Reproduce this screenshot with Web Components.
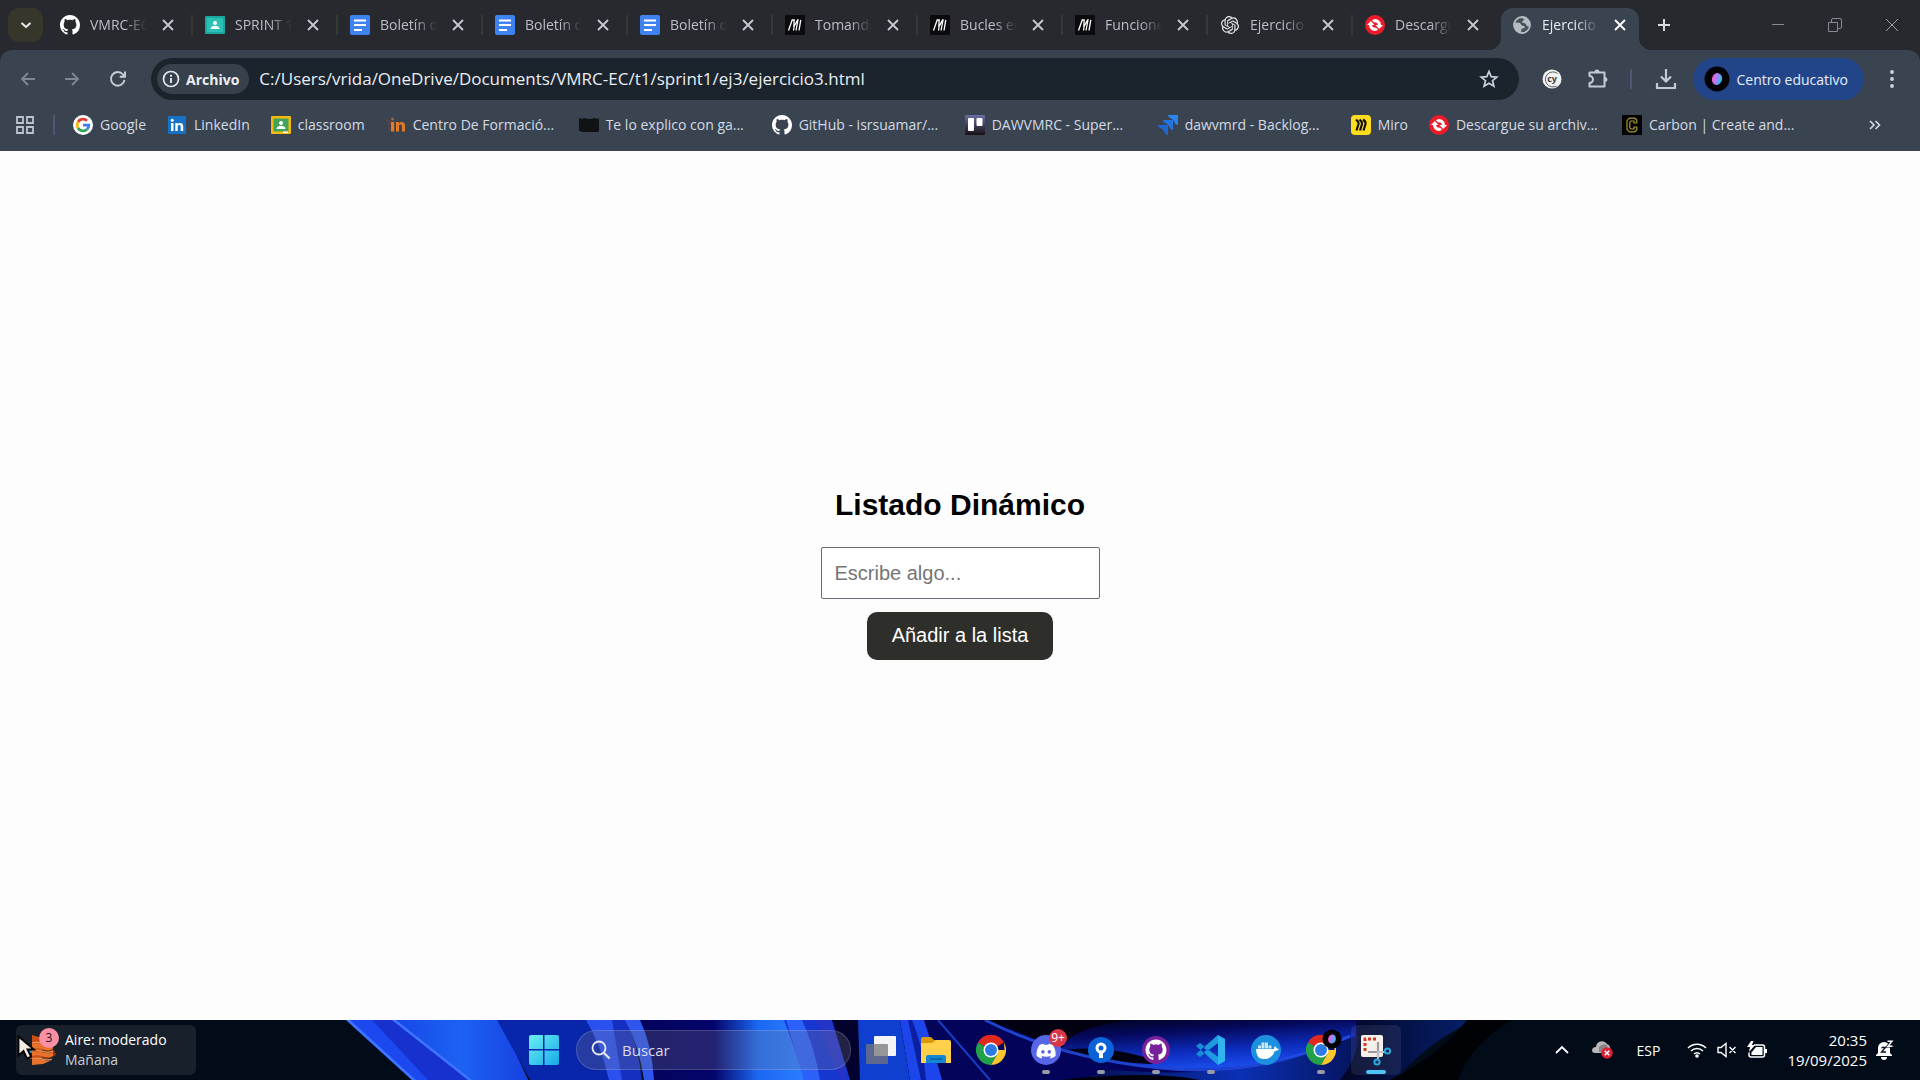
<!DOCTYPE html>
<html lang="es">
<head>
<meta charset="utf-8">
<title>Ejercicio 3</title>
<style>
html,body{height:100%;margin:0}
body{font-family:"Open Sans","Noto Sans",sans-serif;font-size:14px;color:#d3dae6;overflow:hidden}
</style>
</head>
<body>
<desktop-screen></desktop-screen>
<script>
const GH='M8 0C3.58 0 0 3.58 0 8c0 3.54 2.29 6.53 5.47 7.59.4.07.55-.17.55-.38 0-.19-.01-.82-.01-1.49-2.01.37-2.53-.49-2.69-.94-.09-.23-.48-.94-.82-1.13-.28-.15-.68-.52-.01-.53.63-.01 1.08.58 1.23.82.72 1.21 1.87.87 2.33.66.07-.52.28-.87.51-1.07-1.78-.2-3.64-.89-3.64-3.95 0-.87.31-1.59.82-2.15-.08-.2-.36-1.02.08-2.12 0 0 .67-.21 2.2.82.64-.18 1.32-.27 2-.27s1.36.09 2 .27c1.53-1.04 2.2-.82 2.2-.82.44 1.1.16 1.92.08 2.12.51.56.82 1.27.82 2.15 0 3.07-1.87 3.75-3.65 3.95.29.25.54.73.54 1.48 0 1.07-.01 1.93-.01 2.2 0 .21.15.46.55.38A8.01 8.01 0 0 0 16 8c0-4.42-3.58-8-8-8z';
const DISCORD='M20.317 4.3698a19.7913 19.7913 0 00-4.8851-1.5152.0741.0741 0 00-.0785.0371c-.211.3753-.4447.8648-.6083 1.2495-1.8447-.2762-3.68-.2762-5.4868 0-.1636-.3933-.4058-.8742-.6177-1.2495a.077.077 0 00-.0785-.037 19.7363 19.7363 0 00-4.8852 1.515.0699.0699 0 00-.0321.0277C.5334 9.0458-.319 13.5799.0992 18.0578a.0824.0824 0 00.0312.0561c2.0528 1.5076 4.0413 2.4228 5.9929 3.0294a.0777.0777 0 00.0842-.0276c.4616-.6304.8731-1.2952 1.226-1.9942a.076.076 0 00-.0416-.1057c-.6528-.2476-1.2743-.5495-1.8722-.8923a.077.077 0 01-.0076-.1277c.1258-.0943.2517-.1923.3718-.2914a.0743.0743 0 01.0776-.0105c3.9278 1.7933 8.18 1.7933 12.0614 0a.0739.0739 0 01.0785.0095c.1202.099.246.1981.3728.2924a.077.077 0 01-.0066.1276 12.2986 12.2986 0 01-1.873.8914.0766.0766 0 00-.0407.1067c.3604.698.7719 1.3628 1.225 1.9932a.076.076 0 00.0842.0286c1.961-.6067 3.9495-1.5219 6.0023-3.0294a.077.077 0 00.0313-.0552c.5004-5.177-.8382-9.6739-3.5485-13.6604a.061.061 0 00-.0312-.0286zM8.02 15.3312c-1.1825 0-2.1569-1.0857-2.1569-2.419 0-1.3332.9555-2.4189 2.157-2.4189 1.2108 0 2.1757 1.0952 2.1568 2.419 0 1.3332-.9555 2.4189-2.1569 2.4189zm7.9748 0c-1.1825 0-2.1569-1.0857-2.1569-2.419 0-1.3332.9554-2.4189 2.1569-2.4189 1.2108 0 2.1757 1.0952 2.1568 2.419 0 1.3332-.946 2.4189-2.1568 2.4189z';
const OPENAI='M22.2819 9.8211a5.9847 5.9847 0 0 0-.5157-4.9108 6.0462 6.0462 0 0 0-6.5098-2.9A6.0651 6.0651 0 0 0 4.9807 4.1818a5.9847 5.9847 0 0 0-3.9977 2.9 6.0462 6.0462 0 0 0 .7427 7.0966 5.98 5.98 0 0 0 .511 4.9107 6.051 6.051 0 0 0 6.5146 2.9001A5.9847 5.9847 0 0 0 13.2599 24a6.0557 6.0557 0 0 0 5.7718-4.2058 5.9894 5.9894 0 0 0 3.9977-2.9001 6.0557 6.0557 0 0 0-.7475-7.0729zm-9.022 12.6081a4.4755 4.4755 0 0 1-2.8764-1.0408l.1419-.0804 4.7783-2.7582a.7948.7948 0 0 0 .3927-.6813v-6.7369l2.02 1.1686a.071.071 0 0 1 .038.052v5.5826a4.504 4.504 0 0 1-4.4945 4.4944zm-9.6607-4.1254a4.4708 4.4708 0 0 1-.5346-3.0137l.142.0852 4.783 2.7582a.7712.7712 0 0 0 .7806 0l5.8428-3.3685v2.3324a.0804.0804 0 0 1-.0332.0615L9.74 19.9502a4.4992 4.4992 0 0 1-6.1408-1.6464zM2.3408 7.8956a4.485 4.485 0 0 1 2.3655-1.9728V11.6a.7664.7664 0 0 0 .3879.6765l5.8144 3.3543-2.0201 1.1685a.0757.0757 0 0 1-.071 0l-4.8303-2.7865A4.504 4.504 0 0 1 2.3408 7.872zm16.5963 3.8558L13.1038 8.364 15.1192 7.2a.0757.0757 0 0 1 .071 0l4.8303 2.7913a4.4944 4.4944 0 0 1-.6765 8.1042v-5.6772a.79.79 0 0 0-.407-.667zm2.0107-3.0231l-.142-.0852-4.7735-2.7818a.7759.7759 0 0 0-.7854 0L9.409 9.2297V6.8974a.0662.0662 0 0 1 .0284-.0615l4.8303-2.7866a4.4992 4.4992 0 0 1 6.6802 4.66zM8.3065 12.863l-2.02-1.1638a.0804.0804 0 0 1-.038-.0567V6.0742a4.4992 4.4992 0 0 1 7.3757-3.4537l-.142.0805L8.704 5.459a.7948.7948 0 0 0-.3927.6813zm1.0976-2.3654l2.602-1.4998 2.6069 1.4998v2.9994l-2.5974 1.4997-2.6067-1.4997Z';
const chromeArt=`<path d="M15 15 2 7.5A15 15 0 0 1 28 7.5Z" fill="#e02a20"/><path d="M15 15 2 7.5A15 15 0 0 0 15 30L21.5 18.7Z" fill="#22a04c"/><path d="M15 15H28.5L28 7.5A15 15 0 0 1 15 30L21.5 18.7Z" fill="#fbc72e"/><path d="M2 7.5A15 15 0 0 1 28 7.5H15Z" fill="#e02a20"/><circle cx="15" cy="15" r="7.5" fill="#fff"/><circle cx="15" cy="15" r="6" fill="#2c7be5"/>`;
/* name: [width, height, viewBox, markup] */
const ICONS={
 down:[16,16,'0 0 16 16','<path d="M3.500 6l4.500 4 4.500-4" fill="none" stroke="#e8eaee" stroke-width="2"/>'],
 close:[14,14,'0 0 14 14','<path d="M2 2l10 10M12 2l-10 10" stroke="currentColor" stroke-width="1.8"/>'],
 plus:[14,14,'0 0 14 14','<path d="M7 1v12M1 7h12" stroke="#d6dae2" stroke-width="2"/>'],
 github:[20,20,'0 0 16 16',`<path d="${GH}" fill="#fff"/>`],
 sprint:[20,20,'0 0 20 20','<rect y="1" width="20" height="18" rx="1" fill="#18a8a0"/><rect x="2" y="3" width="16" height="14" fill="#2bbfb5"/><circle cx="10" cy="8" r="2" fill="#fff"/><path d="M5.5 14c0-4.500 9-4.500 9 0z" fill="#fff"/>'],
 classroom:[20,20,'0 0 20 20','<rect y="1" width="20" height="18" rx="1" fill="#f2b90f"/><rect x="2.500" y="3.500" width="15" height="13" fill="#43a35c"/><circle cx="10" cy="8" r="2" fill="#fff"/><path d="M5.500 14c0-4.500 9-4.500 9 0z" fill="#fff"/><path d="M12 16.500h5V18h-5z" fill="#fff"/>'],
 docs:[20,20,'0 0 20 20','<rect width="20" height="20" rx="2" fill="#3f83f0"/><path d="M4 5.500h12M4 10h12M4 15h8" stroke="#fff" stroke-width="2"/>'],
 mdn:[20,20,'0 0 20 20','<rect width="20" height="20" fill="#0b0b0f"/><path d="M3.500 15.500 7.200 5H9.200L8.800 12 12.600 5H13L11 15.500M15.800 4.800 14 15.500M9 12 8.500 15.500" fill="none" stroke="#fff" stroke-width="1.300"/>'],
 openai:[18,18,'0 0 24 24',`<path d="${OPENAI}" fill="#e6e8ea"/>`],
 ilove:[20,20,'0 0 20 20','<circle cx="10" cy="10" r="10" fill="#ee1c2a"/><path d="M10 4a6 6 0 0 1 6 6h2l-3.800 4-3.700-4H13a3 3 0 0 0-4-2.500L7 5.200A6 6 0 0 1 10 4ZM10 16a6 6 0 0 1-6-6H2l3.800-4 3.700 4H7a3 3 0 0 0 4 2.500l2 2.300A6 6 0 0 1 10 16Z" fill="#fff"/>'],
 globe:[18,18,'0 0 18 18','<circle cx="9" cy="9" r="8" fill="#46505a" stroke="#b4bcc2" stroke-width="1.800"/><path d="M1 7l4-.5c3 0 3 3.500 5.500 3.500 2 0 1.500 2.500-.5 2.500s-1.500 2-2 4.500C3 16.500.5 12 1 7ZM8 1c6-.5 9 4 9 8-1 2.500-3.500 1.500-4-.5S9 7.500 9 6s2-1 2-2.500S8 3 8 1Z" fill="#b4bcc2"/>'],
 min:[14,14,'0 0 14 14','<path d="M1 6.500h12" stroke="#858b94"/>'],
 restore:[14,14,'0 0 14 14','<path d="M.5 4.500h9v9h-9zM3.500 4V2a1.500 1.500 0 0 1 1.500-1.500h7A1.500 1.500 0 0 1 13.500 2v7a1.500 1.500 0 0 1-1.500 1.500h-2" fill="none" stroke="#858b94"/>'],
 winclose:[14,14,'0 0 14 14','<path d="M1 1l12 12M13 1 1 13" stroke="#9aa0a8"/>'],
 back:[18,18,'0 0 18 18','<path d="M16 9H3M9 3 3 9l6 6" fill="none" stroke="#7f8793" stroke-width="1.800"/>'],
 fwd:[18,18,'0 0 18 18','<path d="M2 9h13M9 3l6 6-6 6" fill="none" stroke="#7f8793" stroke-width="1.800"/>'],
 reload:[18,18,'0 0 18 18','<path d="M15.500 9.800A6.800 6.800 0 1 1 14 4.500L16 6.500M16 1.500v5.300h-5.300" fill="none" stroke="#c8ced8" stroke-width="1.900"/>'],
 info:[18,18,'0 0 18 18','<circle cx="9" cy="9" r="7.500" fill="none" stroke="#e4e8ee" stroke-width="1.700"/><path d="M9 8v5M9 4.800v1.900" stroke="#e4e8ee" stroke-width="1.900"/>'],
 star:[20,20,'0 0 20 20','<path d="M10 2.500l2.200 5.200 5.600.4-4.300 3.600 1.400 5.500L10 14.200l-4.900 3 1.400-5.500L2.200 8.100l5.600-.4Z" fill="none" stroke="#c8d0dc" stroke-width="1.700"/>'],
 cy:[20,20,'0 0 20 20','<circle cx="10" cy="10" r="9.500" fill="#f2f2ee"/><path d="M15.500 4.500a7.500 7.500 0 1 0-1 12.500" fill="none" stroke="#5a6068"/><text x="10" y="13" text-anchor="middle" font-size="9" font-weight="700" fill="#3b4048" font-family="Open Sans">cy</text>'],
 puzzle:[22,22,'0 0 22 22','<path d="M2.500 4.500H17.500V18.500H2.500V15a3.500 3.500 0 0 0 0-7Z" fill="none" stroke="#c3cad6" stroke-width="2" stroke-linejoin="round"/><path d="M7.500 4a2.500 2.500 0 0 1 5 0ZM18 9a2.500 2.500 0 0 1 0 5Z" fill="#c3cad6"/>'],
 download:[22,22,'0 0 22 22','<path d="M11 1v12M6 8.500l5 5 5-5M2 15v5h18v-5" fill="none" stroke="#c3cad6" stroke-width="2.200"/>'],
 avatar:[26,26,'0 0 26 26','<defs><linearGradient id="av"><stop offset="0" stop-color="#f063d8"/><stop offset=".45" stop-color="#b07cf2"/><stop offset="1" stop-color="#12d0f0"/></linearGradient></defs><circle cx="13" cy="13" r="12.500" fill="#020206"/><ellipse cx="13" cy="13" rx="5" ry="6" fill="url(#av)" transform="rotate(15 13 13)"/>'],
 dots:[6,20,'0 0 6 20','<g fill="#ccd3de"><circle cx="3" cy="3" r="1.900"/><circle cx="3" cy="10" r="1.900"/><circle cx="3" cy="17" r="1.900"/></g>'],
 apps:[18,18,'0 0 18 18','<path d="M1 1h6v6H1zM11 1h6v6h-6zM1 11h6v6H1zM11 11h6v6h-6z" fill="none" stroke="#bcc3cf" stroke-width="1.800"/>'],
 more:[12,12,'0 0 12 12','<path d="M1 2l4 4-4 4M6.500 2l4 4-4 4" fill="none" stroke="#d3dae6" stroke-width="1.600"/>'],
 google:[20,20,'0 0 20 20','<circle cx="10" cy="10" r="10" fill="#fff"/><g fill="none" stroke-width="2.800"><path d="M5 7a5.800 5.800 0 0 1 9-1.200" stroke="#e33b2e"/><path d="M5 13a5.800 5.800 0 0 1 0-6" stroke="#f5b912"/><path d="M14 14.300A5.800 5.800 0 0 1 5 13" stroke="#2fa650"/><path d="M10 10.200h5.800a5.800 5.800 0 0 1-1.800 4.100" stroke="#3b7ded"/></g>'],
 linkedin:[20,20,'0 0 20 20','<rect x="1" y="1" width="18" height="18" rx="1" fill="#1672c4"/><path d="M4 8h2.500v8H4zM8.300 8h2.400v1.200c1-2 5.500-2 5.500 2V16h-2.500v-4.300c0-2.200-3-2-3 0V16H8.300z" fill="#fff"/><circle cx="5.200" cy="5.200" r="1.500" fill="#fff"/>'],
 centro:[20,20,'0 0 20 20','<path d="M0 5l4 1v3l-2 1M2 13h2v3" fill="none" stroke="#6a3f40" stroke-width="1.500"/><path d="M5 7h3.200v9.500H5zM10 7h3v1.500c1.200-2.500 6-2.300 6 2v6h-3v-5.300c0-2.300-3-2.300-3 0v5.300h-3z" fill="#e27a24"/><circle cx="6.500" cy="4" r="1.400" fill="#b3613a"/>'],
 cat:[20,20,'0 0 20 20','<path d="M0 3l3 1 2-1 5 1 6-1 2 1 2-1v13l-1 1H3l-1-1H0Z" fill="#101214"/>'],
 trello:[20,20,'0 0 20 20','<defs><linearGradient id="tr" x2="0" y2="1"><stop stop-color="#6a70a6"/><stop offset="1" stop-color="#181013"/></linearGradient></defs><rect width="20" height="20" rx="1" fill="url(#tr)"/><rect x="3" y="3" width="6" height="13" rx="1" fill="#fff"/><rect x="11.500" y="3" width="6" height="8" rx="1" fill="#fff"/>'],
 jira:[20,20,'0 0 20 20','<path d="M10 0h10v10a4 4 0 0 1-3.500-3.500L13.500 3.500Q10.500 3 10 0Z" fill="#2b83f2"/><path d="M5 5h10v10a4 4 0 0 1-3.500-3.500L8.500 8.500Q5.500 8 5 5Z" fill="#2374e0"/><path d="M0 10h10v10a4 4 0 0 1-3.500-3.500L3.500 13.500Q.5 13 0 10Z" fill="#1c68cf"/>'],
 miro:[20,20,'0 0 20 20','<rect width="20" height="20" rx="4" fill="#ffdd1c"/><path d="M5 4.500Q8 7 7.500 9L5.500 15.500M8.500 4.500Q11.500 7 11 9L9 15.500M12 4.500Q15 6.500 14.500 9L12.500 15.500" fill="none" stroke="#111" stroke-width="2.200"/>'],
 carbon:[20,20,'0 0 20 20','<rect width="20" height="20" fill="#020202"/><path d="M14.800 8V5l-2-1.800H7.500L5 5.700v8.600l2.500 2.500h5.300l2-1.800v-3h-2.800v2H9l-1.200-1.200V7.200L9 6h3v2Z" fill="none" stroke="#a39a2a" stroke-width="1.200"/>'],
 weather:[36,34,'0 0 36 34','<path d="M4 15c6-3 12-2 26 2l2 5-8 4H6l-2-3h6Z" fill="#8f3c14"/><path d="M4 16h6v4H4Z" fill="#2b8cc4"/><path d="M8 2l10 3v24L8 32Z" fill="#c94f14"/><path d="M8 11c8-3 12 4 21 0v5c-8 4-13-3-21 0ZM8 19c8-3 12 4 21 0v4c-8 4-13-3-21 0ZM8 27c8-3 12 2 20 0l-9 4-11 1Z" fill="#e8722c"/><path d="M8 10c8-3 12 4 21 0M8 18c8-3 12 4 21 0M8 26c8-3 12 3 20 0" fill="none" stroke="#f3a56b"/>'],
 cursor:[20,26,'0 0 20 26','<path d="M1.500 1.500v19l5-4.500 3.500 7.500 4-2-3.500-7H17Z" fill="#f3ece2" stroke="#000" stroke-width="1.800"/>'],
 start:[30,30,'0 0 30 30','<defs><linearGradient id="st" x2="1" y2="1"><stop stop-color="#6af0f4"/><stop offset="1" stop-color="#18a9e8"/></linearGradient></defs><path d="M2 0h12v14H0V2a2 2 0 0 1 2-2ZM15.500 0H28a2 2 0 0 1 2 2v12H15.500ZM0 15.500h14V30H2a2 2 0 0 1-2-2ZM15.500 15.500H30V28a2 2 0 0 1-2 2H15.500Z" fill="url(#st)"/>'],
 search:[20,20,'0 0 20 20','<circle cx="8" cy="8" r="6.500" fill="none" stroke="#e9e9ef" stroke-width="1.800"/><path d="M12.800 12.800 18.500 18.500" stroke="#e9e9ef" stroke-width="2.200"/>'],
 taskview:[32,30,'0 0 32 30','<rect x="9" y="1" width="22" height="20" rx="1" fill="#f4f4f6"/><rect x="1" y="9" width="22" height="20" rx="1" fill="#77777a" opacity=".75"/>'],
 folder:[32,30,'0 0 32 30','<path d="M1 4a2 2 0 0 1 2-2h8l3 3h14v6H1Z" fill="#d99a0c"/><path d="M1 8h11l4-3h13a2 2 0 0 1 2 2v21H1Z" fill="#ffd04a"/><path d="M6 28v-6a2 2 0 0 1 2-2h16a2 2 0 0 1 2 2v6Z" fill="#1388d2"/><path d="M10 24h12" stroke="#0c5ea2" stroke-width="1.600"/>'],
 chrome:[30,30,'0 0 30 30',chromeArt],
 discord:[30,30,'0 0 30 30',`<circle cx="15" cy="15" r="15" fill="#5865e6"/><g transform="translate(5.500 6.500) scale(.8)"><path d="${DISCORD}" fill="#fff"/></g>`],
 sourcetree:[28,28,'0 0 28 28','<circle cx="14" cy="14" r="13" fill="#0b62d8"/><circle cx="14" cy="12" r="4" fill="none" stroke="#fff" stroke-width="3"/><path d="M12 16h4v6h-4z" fill="#fff"/>'],
 ghdesk:[30,30,'0 0 30 30',`<circle cx="15" cy="15" r="14" fill="#77219c"/><g transform="translate(4.500 4.500) scale(1.310)"><path d="${GH}" fill="#fff"/></g>`],
 vscode:[32,32,'0 0 32 32','<path d="M23 1l7 4v22l-7 4Z" fill="#30b4f0"/><path d="M23 1v8L5 23 1 20ZM23 31v-8L5 9 1 12Z" fill="#188dd2"/><path d="M23 1 9 14l3 2.500L23 9ZM23 31 9 18l3-2.500L23 23Z" fill="#1c9be0"/>'],
 docker:[30,30,'0 0 30 30','<circle cx="15" cy="15" r="15" fill="#1c90df"/><path d="M5 14h18q0-2 1-3l2 2.500 2 .5q-1 2-4 2-3 8-11 8-8 0-8-10Z" fill="#fff"/><path d="M7 10.500h3v3H7zM10.500 10.500h3v3h-3zM14 10.500h3v3h-3zM17.500 10.500h3v3h-3zM10.500 7.500h3v3h-3zM14 7.500h3v3h-3z" fill="#c9e6fa"/>'],
 snip:[32,32,'0 0 32 32','<rect x="1" y="1" width="22" height="22" rx="2" fill="#f5f0ea"/><path d="M5 17V5h13" fill="none" stroke="#d33a22" stroke-width="3" stroke-dasharray="3 2"/><path d="M18 8v14M8 18h14" stroke="#9a9aa0" stroke-width="2.200"/><path d="M18 17v8M17 18h8" stroke="#bfc3c8" stroke-width="2.200"/><circle cx="17" cy="28" r="2.600" fill="none" stroke="#27a9e0" stroke-width="2"/><circle cx="27.500" cy="17" r="2.600" fill="none" stroke="#27a9e0" stroke-width="2"/>'],
 up:[16,16,'0 0 16 16','<path d="M2 11l6-6 6 6" fill="none" stroke="#fff" stroke-width="1.800"/>'],
 cloud:[22,20,'0 0 22 20','<path d="M1 11a4 4 0 0 1 4-4 6 6 0 0 1 11-3 5 5 0 0 1 1 9H4a3 3 0 0 1-3-2Z" fill="#b9b9bb"/><path d="M8 7a6 6 0 0 1 8-2l1 7H8Z" fill="#858588"/><circle cx="16" cy="13" r="5.800" fill="#dc1f34"/><path d="M13.700 10.700l4.600 4.600m0-4.600-4.600 4.600" stroke="#fff" stroke-width="1.500"/>'],
 wifi:[20,16,'0 0 20 16','<g fill="none" stroke="#fff" stroke-width="1.500"><path d="M1 6a12.500 12.500 0 0 1 18 0M4 9a8.500 8.500 0 0 1 12 0M7 12a4.500 4.500 0 0 1 6 0"/></g><circle cx="10" cy="14" r="1.800" fill="#fff"/>'],
 mute:[20,16,'0 0 20 16','<path d="M1 5.500h3L9 1.500v13L4 10.500H1ZM12.500 5l6 6m0-6-6 6" fill="none" stroke="#fff" stroke-width="1.400"/>'],
 battery:[20,18,'0 0 20 18','<path d="M7 4h8.500a2 2 0 0 1 2 2v8a2 2 0 0 1-2 2H4a2 2 0 0 1-2-2v-2.500" fill="none" stroke="#fff" stroke-width="1.500"/><path d="M9 6h6.500v8h-11v-2.500Z" fill="#fff"/><path d="M18 8h2v4h-2zM4 0l-4 6h3l-1 5 6-7H5l1.500-4Z" fill="#fff"/>'],
 bell:[18,20,'0 0 18 20','<path d="M8 2a6 6 0 0 0-6 6v5l-2 2v1h16v-1l-2-2V8a6 6 0 0 0-6-6ZM5 17h6a3 3 0 0 1-6 0Z" fill="#fff"/><path d="M11.500 1.200H16l-4 5h4.500" fill="none" stroke="#0a1222" stroke-width="2.800"/><path d="M5.500 7.500h4l-4 4.500h4.500" fill="none" stroke="#0a1222" stroke-width="1.300"/><path d="M11.500 1.200H16l-4 5h4.500" fill="none" stroke="#fff" stroke-width="1.400"/>']
};
function define(name,html,setup){
  const t=document.createElement('template');t.innerHTML=html;
  customElements.define(name,class extends HTMLElement{
    constructor(){super();this.attachShadow({mode:'open'}).append(t.content.cloneNode(true));}
    connectedCallback(){if(setup)setup(this,this.shadowRoot);}
  });
}
define('app-icon','<style>:host{display:inline-flex;flex:none}svg{display:block}</style>',(el,r)=>{
  if(r.querySelector('svg'))return;
  const [w,h,v,m]=ICONS[el.getAttribute('name')];
  r.innerHTML+=`<svg width="${w}" height="${h}" viewBox="${v}" aria-hidden="true">${m}</svg>`;
});
const BTN='button{font:inherit;color:inherit;background:none;border:0;padding:0;margin:0;display:flex;align-items:center;justify-content:center}';
define('icon-button',`<style>:host{display:flex;flex:none;width:var(--w,44px);height:var(--h,36px)}${BTN}button{width:100%;height:100%}</style><button></button>`,(el,r)=>{
  const b=r.querySelector('button');
  if(b.firstChild)return;
  b.setAttribute('aria-label',el.getAttribute('label')||el.getAttribute('name'));
  const i=document.createElement('app-icon');i.setAttribute('name',el.getAttribute('name'));
  b.append(i);
});
define('browser-tab',`<style>
:host{display:flex;box-sizing:border-box;width:145px;flex:0 1 auto;min-width:0;height:42px;position:relative;color:#b9bec8}
${BTN}
.tab{flex:1;display:flex;align-items:center;padding:0 0 8px 12px;min-width:0}
.pick{gap:10px;flex:1;min-width:0;justify-content:flex-start}
::slotted(app-icon){width:20px;justify-content:center}
.t{flex:1;text-align:left;overflow:hidden;white-space:nowrap;line-height:20px;-webkit-mask-image:linear-gradient(90deg,#000 60%,transparent 98%);mask-image:linear-gradient(90deg,#000 60%,transparent 98%)}
.x{width:20px;height:20px;margin:0 13px 0 10px;color:#c6cad4}
:host(:not([active]):not([last]))::after{content:"";width:2px;height:20px;background:#353a34;margin-top:7px}
:host([active]){color:#e6eaf0}
:host([active]) .x{color:#fff}
:host([active]) .tab{background:#3a4450;border-radius:12px 12px 0 0;margin:0 4px 0 3px;padding-left:11px}
:host([active]) .x{margin-right:9px}
:host([last]) .x{margin-right:15px}
:host([active])::before,:host([active]) .foot{content:"";position:absolute;bottom:0;width:12px;height:12px}
:host([active])::before{left:-9px;background:radial-gradient(circle at 0 0,transparent 12px,#3a4450 12px)}
:host([active]) .foot{right:-8px;background:radial-gradient(circle at 100% 0,transparent 12px,#3a4450 12px)}
</style><div class="tab"><button class="pick"><slot name="icon"></slot><span class="t"><slot></slot></span></button><button class="x" aria-label="Cerrar"><app-icon name="close"></app-icon></button></div><span class="foot"></span>`);
define('tab-strip',`<style>
:host{display:flex;align-items:flex-end;height:50px;background:#27292f;padding-left:8px;box-sizing:border-box}
.find{width:35px;height:34px;border-radius:11px;background:#36362a;margin:0 5px 8px 0;--w:35px;--h:34px}
.tabs{display:flex;flex:0 1 auto;min-width:0}
.new{--w:42px;--h:50px}.gap{flex:1}.win{--w:57px;--h:50px}
</style><div class="find"><icon-button name="down" label="Buscar pestañas"></icon-button></div><div class="tabs"><slot></slot></div><icon-button class="new" name="plus" label="Nueva pestaña"></icon-button><span class="gap"></span><icon-button class="win" name="min" label="Minimizar"></icon-button><icon-button class="win" name="restore" label="Restaurar"></icon-button><icon-button class="win" name="winclose" label="Cerrar"></icon-button>`);
define('browser-toolbar',`<style>
:host{display:flex;align-items:center;height:58px;background:#3a4450;border-radius:12px 12px 0 0;padding:0 7px 0 6px;box-sizing:border-box}
${BTN}
.reload{--w:48px;margin-right:9px}
.omni{flex:1;display:flex;align-items:center;height:42px;border-radius:21px;background:#1b242c;padding:0 8px 0 6px;min-width:0}
.chip{height:30px;border-radius:15px;background:#37414c;padding:0 10px 0 5px;gap:6px;font-weight:700;color:#eceff4}
input{flex:1;min-width:0;height:30px;margin:0 0 0 10px;padding:0;border:0;outline:0;background:none;font:17px/30px "Open Sans","Noto Sans",sans-serif;color:#e9eef4}
.ext{--w:46px}.first{margin-left:10px}
.sep{width:2px;height:20px;background:#4d5674;margin:0 11px 0 9px}
.me{height:42px;border-radius:21px;background:#22458a;padding:0 16px 0 11px;gap:7px;color:#e6eefb;white-space:nowrap;margin-left:4px}
.dots{--w:42px;margin-left:7px}
</style>
<icon-button name="back" label="Atrás"></icon-button><icon-button name="fwd" label="Adelante"></icon-button><icon-button class="reload" name="reload" label="Recargar"></icon-button>
<div class="omni"><button class="chip"><app-icon name="info"></app-icon>Archivo</button><input aria-label="Dirección" value="C:/Users/vrida/OneDrive/Documents/VMRC-EC/t1/sprint1/ej3/ejercicio3.html"><icon-button name="star" label="Favorito"></icon-button></div>
<icon-button class="ext first" name="cy" label="Cypress"></icon-button><icon-button class="ext" name="puzzle" label="Extensiones"></icon-button><span class="sep"></span><icon-button class="ext" name="download" label="Descargas"></icon-button>
<button class="me"><app-icon name="avatar"></app-icon>Centro educativo</button><icon-button class="dots" name="dots" label="Menú"></icon-button>`);
define('bookmark-link',`<style>:host{display:block;flex:none}:host([wide]){width:172px}a{display:flex;align-items:center;gap:7px;color:inherit;text-decoration:none;white-space:nowrap;line-height:20px}</style><a href="#"><slot name="icon"></slot><span><slot></slot></span></a>`);
define('bookmark-bar',`<style>
:host{display:flex;align-items:center;height:43px;background:#3a4450;padding:0 17px 9px 16px;box-sizing:border-box}
.sep{width:2px;height:20px;background:#4d5674;margin:0 18px 0 19px}
.list{display:flex;flex:1;gap:21px;min-width:0;overflow:hidden}
.apps{--w:18px}.more{--w:56px}
</style><icon-button class="apps" name="apps" label="Aplicaciones"></icon-button><span class="sep"></span><div class="list"><slot></slot></div><icon-button class="more" name="more" label="Más marcadores"></icon-button>`);
define('dynamic-list',`<style>
:host{flex:1;display:flex;flex-direction:column;align-items:center;justify-content:center;background:#fdfdfd;color:#000;font-family:"Liberation Sans",Arial,sans-serif;padding-bottom:24px;min-height:0}
h2{font-size:30px;line-height:36px;margin:0 0 24px}
form{display:flex;flex-direction:column;align-items:center;gap:13px}
input{width:279px;height:52px;box-sizing:border-box;border:1px solid #6b6b76;border-radius:2px;padding:0 13px;font:20px "Liberation Sans",Arial,sans-serif;background:#fff}
input::placeholder{color:#757575}
button{height:48px;border:0;border-radius:10px;background:#2e2e2a;color:#fff;padding:0 25px 2px;font:20px "Liberation Sans",Arial,sans-serif}
</style><h2>Listado Dinámico</h2><form><input aria-label="Elemento" placeholder="Escribe algo..."><button type="button">Añadir a la lista</button></form>`);
define('task-app',`<style>
:host{display:flex;position:relative;width:50px;height:50px;border-radius:6px}
${BTN}button{width:100%;height:100%}
:host([run])::after{content:"";position:absolute;left:21px;bottom:1px;width:8px;height:4px;border-radius:2px;background:#9a9aa6}
:host([current]){background:#ffffff14}
:host([current])::after{left:15px;width:20px;background:#4cc2f5}
::slotted([slot=badge]){position:absolute;right:4px;top:4px}
</style><button><slot></slot></button><slot name="badge"></slot>`,(el,r)=>r.querySelector('button').setAttribute('aria-label',el.getAttribute('label')));
define('count-badge',`<style>:host{display:flex;align-items:center;justify-content:center;height:18px;width:18px;border-radius:9px;font-size:12px;line-height:18px;background:#d93648;color:#fff}:host([pink]){width:20px;height:20px;border-radius:10px;background:#fb8fa4;color:#241418}</style><slot></slot>`);
define('task-bar',`<style>
:host{position:relative;display:grid;grid-template-columns:1fr auto 1fr;align-items:center;height:60px;background:#020b18;color:#fff;overflow:hidden}
${BTN}
.wall{position:absolute;inset:0;width:100%;height:100%}
.side,.mid{position:relative;display:flex;align-items:center}
.weather{position:relative;height:50px;width:180px;margin-left:16px;border-radius:6px;background:#ffffff16;justify-content:flex-start;padding-left:8px;gap:5px;line-height:20px;text-align:left}
.weather small{display:block;font-size:14px;color:#c9ccd2}
.weather count-badge{position:absolute;left:23px;top:3px}
.cur{position:absolute;left:17px;top:10px}
.mid{gap:5px}
.search{display:flex;align-items:center;gap:11px;width:275px;height:40px;box-sizing:border-box;border-radius:20px;background:#80809040;border:1px solid #ffffff2a;padding:0 14px;margin-left:2px}
.search input{flex:1;min-width:0;border:0;outline:0;background:none;padding:0;color:#e3e3ea;font:15px/24px "Open Sans","Noto Sans",sans-serif}
.search input::placeholder{color:#dcdce4;opacity:1}
.tray{justify-content:flex-end;padding-right:26px}
.tray button{height:40px}
.esp{width:52px}.up{width:40px}.cl{width:40px;}
.net{gap:10px;padding:0 12px 0 13px}
.clock{font-size:15px;line-height:20px;text-align:right;margin:0 9px 0 8px;white-space:nowrap}
</style>
<svg class="wall" viewBox="0 0 1920 60" preserveAspectRatio="none" aria-hidden="true"><defs>
<linearGradient id="a"><stop stop-color="#1546e6"/><stop offset=".5" stop-color="#1d62f4"/><stop offset="1" stop-color="#1741e0"/></linearGradient>
<linearGradient id="b"><stop stop-color="#04045c"/><stop offset=".45" stop-color="#04046a"/><stop offset=".72" stop-color="#1b68f2"/><stop offset="1" stop-color="#2b7dff"/></linearGradient>
<linearGradient id="c" x1=".1" y1="0" x2=".6" y2="1"><stop stop-color="#010112"/><stop offset=".35" stop-color="#05095c"/><stop offset=".7" stop-color="#0c2cbc"/><stop offset="1" stop-color="#1a4eee"/></linearGradient>
<linearGradient id="d"><stop stop-color="#04104e"/><stop offset=".5" stop-color="#0a30b4"/><stop offset="1" stop-color="#03093c"/></linearGradient>
<linearGradient id="e"><stop stop-color="#020526"/><stop offset="1" stop-color="#06206c"/></linearGradient></defs>
<path d="M346 0H500L528 60H412Z" fill="#1c48f0"/><path d="M372 0h20l76 60h-40Z" fill="#1731cf"/><path d="M392 0H500L528 60H470Z" fill="url(#a)"/><path d="M346 0h4l66 60h-4ZM392 0h4l76 60h-4Z" fill="#3d74ff"/>
<path d="M497 0H600L630 60H530Z" fill="#0826aa"/>
<path d="M640 0H786Q800 25 804 60H650Z" fill="url(#b)"/>
<path d="M586 0h30q9 25 9 60h-16Q601 25 586 0Z" fill="#2a50ef"/><path d="M612 0h14q12 25 16 60h-20Z" fill="#1530c0"/><path d="M625 0h15q12 25 14 60h-10Q639 25 625 0Z" fill="#2e56ee"/>
<path d="M784 0h50q15 30 18 60h-46Z" fill="#1636d0"/><path d="M786 0h16q12 25 18 60h-16Z" fill="#2b60fa"/><path d="M815 0h16q12 30 16 60h-6Z" fill="#2434c8"/>
<path d="M832 0h30v60h-12Z" fill="#03022e"/><path d="M858 0h42l10 60h-50Z" fill="#0f3fce"/>
<path d="M900 0h38l60 60h-88Z" fill="#040458"/><path d="M900 0h24q10 30 18 60h-32Z" fill="#1c45ec"/><path d="M908 0h4q12 30 14 60h-5Z" fill="#0a20a0"/>
<path d="M938 0H1360V60H992Z" fill="#03035a"/><path d="M938 0 990 60" stroke="#163cc8" stroke-width="2"/>
<path d="M1110 50Q1260 62 1356 16H1400V60H1080Z" fill="url(#d)"/>
<path d="M1060 60Q1150 50 1200 60Z" fill="#01010c"/>
<path d="M985 0H1356V16Q1260 56 1160 47Q1060 35 985 0Z" fill="url(#c)"/>
<path d="M1000 0H1130Q1070 8 1062 28Q1025 18 1000 0Z" fill="#010112"/>
<path d="M1062 30Q1110 24 1160 42L1150 44Q1100 42 1062 30Z" fill="#010112"/>
<path d="M985 0Q1060 38 1160 48T1350 16" fill="none" stroke="#2452ee" stroke-width="3" opacity=".8"/>
<path d="M1356 0H1475Q1430 20 1395 60H1340Q1364 30 1356 0Z" fill="url(#e)"/>
<path d="M1467 0H1512Q1470 25 1458 60H1390Q1440 35 1467 0Z" fill="#010206"/>
</svg>
<div class="side"><button class="weather"><app-icon name="weather"></app-icon><span>Aire: moderado<small>Mañana</small></span><count-badge pink>3</count-badge></button><app-icon class="cur" name="cursor"></app-icon></div>
<div class="mid">
<task-app label="Inicio"><app-icon name="start"></app-icon></task-app>
<label class="search"><app-icon name="search"></app-icon><input placeholder="Buscar" aria-label="Buscar"></label>
<task-app label="Vista de tareas"><app-icon name="taskview"></app-icon></task-app>
<task-app label="Explorador"><app-icon name="folder"></app-icon></task-app>
<task-app label="Chrome"><app-icon name="chrome"></app-icon></task-app>
<task-app label="Discord" run><app-icon name="discord"></app-icon><count-badge slot="badge">9+</count-badge></task-app>
<task-app label="Sourcetree" run><app-icon name="sourcetree"></app-icon></task-app>
<task-app label="GitHub Desktop" run><app-icon name="ghdesk"></app-icon></task-app>
<task-app label="Visual Studio Code" run><app-icon name="vscode"></app-icon></task-app>
<task-app label="Docker"><app-icon name="docker"></app-icon></task-app>
<task-app label="Chrome, Centro educativo" run><app-icon name="chrome"></app-icon><app-icon slot="badge" name="badgeAvatar"></app-icon></task-app>
<task-app label="Recortes" run current><app-icon name="snip"></app-icon></task-app>
</div>
<div class="side tray"><button class="up" aria-label="Iconos ocultos"><app-icon name="up"></app-icon></button><button class="cl" aria-label="OneDrive"><app-icon name="cloud"></app-icon></button><button class="esp">ESP</button><button class="net" aria-label="Red, volumen y batería"><app-icon name="wifi"></app-icon><app-icon name="mute"></app-icon><app-icon name="battery"></app-icon></button><div class="clock">20:35<br>19/09/2025</div><app-icon name="bell"></app-icon></div>`);
ICONS.badgeAvatar=[20,20,'0 0 26 26',ICONS.avatar[3]];
const tabs=[['github','VMRC-EC'],['sprint','SPRINT 1'],['docs','Boletín de'],['docs','Boletín de'],['docs','Boletín de'],['mdn','Tomando'],['mdn','Bucles en'],['mdn','Funcione'],['openai','Ejercicio'],['ilove','Descargue'],['globe','Ejercicio']];
const marks=[['google','Google'],['linkedin','LinkedIn'],['classroom','classroom'],['centro','Centro De Formació...',1],['cat','Te lo explico con ga...',1],['github','GitHub - isrsuamar/...',1],['trello','DAWVMRC - Super...',1],['jira','dawvmrd - Backlog...',1],['miro','Miro'],['ilove','Descargue su archiv...',1],['carbon','Carbon | Create and...',1]];
define('desktop-screen',`<style>:host{display:flex;flex-direction:column;height:100vh}header{background:#27292f}</style>
<header><tab-strip>${tabs.map(([i,t],n)=>`<browser-tab${n===10?' active':n===9?' last':''}><app-icon slot="icon" name="${i}"></app-icon>${t}</browser-tab>`).join('')}</tab-strip><browser-toolbar></browser-toolbar><bookmark-bar>${marks.map(([i,t,w])=>`<bookmark-link${w?' wide':''}><app-icon slot="icon" name="${i}"></app-icon>${t}</bookmark-link>`).join('')}</bookmark-bar></header>
<dynamic-list></dynamic-list><task-bar></task-bar>`);
</script>
</body>
</html>
